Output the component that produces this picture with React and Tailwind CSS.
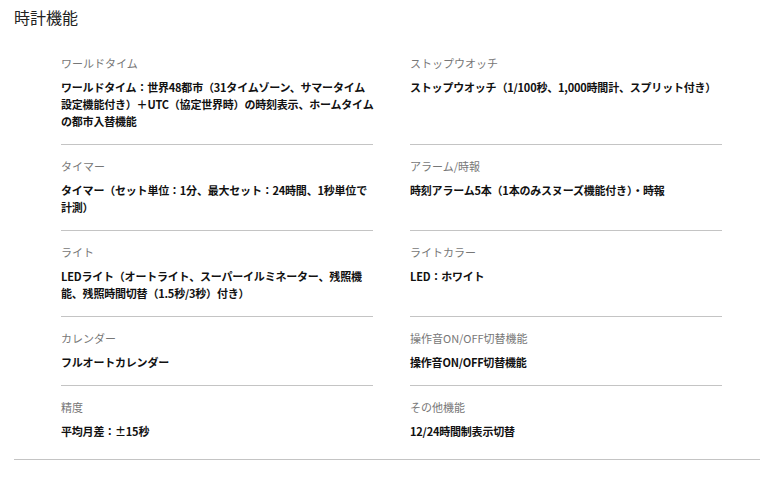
const rows = [
  [
    { label: 'ワールドタイム', value: ['ワールドタイム：世界48都市（31タイムゾーン、サマータイム', '設定機能付き）＋UTC（協定世界時）の時刻表示、ホームタイム', 'の都市入替機能'] },
    { label: 'ストップウオッチ', value: ['ストップウオッチ（1/100秒、1,000時間計、スプリット付き）'] },
  ],
  [
    { label: 'タイマー', value: ['タイマー（セット単位：1分、最大セット：24時間、1秒単位で', '計測）'] },
    { label: 'アラーム/時報', value: ['時刻アラーム5本（1本のみスヌーズ機能付き）・時報'] },
  ],
  [
    { label: 'ライト', value: ['LEDライト（オートライト、スーパーイルミネーター、残照機', '能、残照時間切替（1.5秒/3秒）付き）'] },
    { label: 'ライトカラー', value: ['LED：ホワイト'] },
  ],
  [
    { label: 'カレンダー', value: ['フルオートカレンダー'] },
    { label: '操作音ON/OFF切替機能', value: ['操作音ON/OFF切替機能'] },
  ],
  [
    { label: '精度', value: ['平均月差：±15秒'] },
    { label: 'その他機能', value: ['12/24時間制表示切替'] },
  ],
];

function Spec({ label, value, last }) {
  return (
    <div className={last ? 'pt-[13px] pb-[19px]' : 'pt-[13px] pb-[14px] border-b border-[#c4c4c4]'}>
      <div className="text-[11px] leading-[16px] text-[#777]">{label}</div>
      <div className="mt-[8px] text-[11px] leading-[17px] tracking-[-0.2px] font-bold text-[#111]">
        {value.map((line) => (
          <div key={line} className="whitespace-nowrap">{line}</div>
        ))}
      </div>
    </div>
  );
}

export default function App() {
  return (
    <div className="w-[769px] h-[484px] bg-white font-['Noto_Sans_CJK_JP',sans-serif]">
      <h2 className="pl-[14px] pt-[7px] text-[16px] leading-[20px] text-[#222]">時計機能</h2>

      {/* spec grid */}
      <div className="mx-[9px] ml-[14px] mt-[15px] border-b border-[#c4c4c4]">
        <div className="grid grid-cols-[312px_312px] gap-x-[37px] pl-[47px]">
          {rows.map((row, i) =>
            row.map((item) => (
              <Spec key={item.label} label={item.label} value={item.value} last={i === rows.length - 1} />
            ))
          )}
        </div>
      </div>
    </div>
  );
}
